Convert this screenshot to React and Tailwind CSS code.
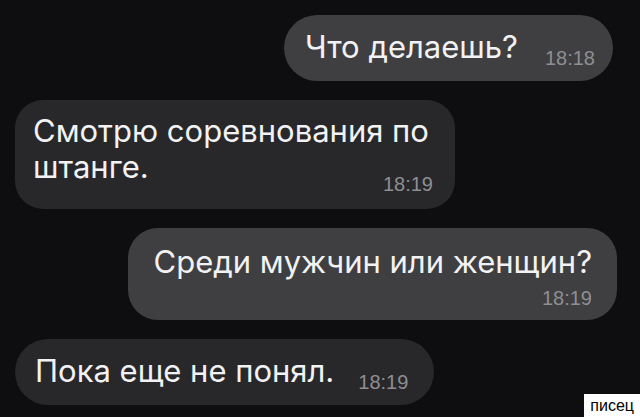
import React from "react";

const font = { fontFamily: 'Inter, "Liberation Sans", sans-serif' };

const Time = ({ children, className = "" }) => (
  <span
    className={`text-[20px] leading-[20px] text-[#8e8e93] font-['Liberation_Sans',Arial,sans-serif] ${className}`}
  >
    {children}
  </span>
);

const App = () => {
  return (
    <div
      className="relative w-[640px] h-[417px] overflow-hidden bg-[#0e0e10] text-[#f2f2f4] flex flex-col pt-[15px] gap-[19px]"
      style={font}
    >
      {/* outgoing */}
      <div className="self-end mr-[27px] flex items-end rounded-[33px] bg-[#3f3f41] pl-[21px] pr-[18px] pt-[14px] pb-[16px]">
        <span className="text-[31px] leading-[36px]">Что делаешь?</span>
        <Time className="ml-[27px] -mb-[3px]">18:18</Time>
      </div>

      {/* incoming */}
      <div className="self-start ml-[15px] w-[440px] flex flex-col rounded-[28px] bg-[#28282a] pl-[18px] pr-[22px] pt-[13px] pb-[15px]">
        <span className="text-[31px] leading-[36px]">
          Смотрю соревнования по
          <br />
          штанге.
        </span>
        <Time className="self-end -mt-[11px]">18:19</Time>
      </div>

      {/* outgoing */}
      <div className="self-end mr-[23px] flex flex-col rounded-[30px] bg-[#3f3f41] pl-[26px] pr-[25px] pt-[16px] pb-[12px]">
        <span className="text-[31px] leading-[36px]">Среди мужчин или женщин?</span>
        <Time className="self-end mt-[8px]">18:19</Time>
      </div>

      {/* incoming */}
      <div className="self-start ml-[15px] flex items-end rounded-[33px] bg-[#28282a] pl-[20px] pr-[26px] pt-[14px] pb-[16px]">
        <span className="text-[31px] leading-[36px]">Пока еще не понял.</span>
        <Time className="ml-[24px] -mb-[3px]">18:19</Time>
      </div>

      <div className="absolute right-0 bottom-0 bg-white text-black text-[16px] leading-[23px] px-[6px] font-['Liberation_Sans',Arial,sans-serif]">
        писец
      </div>
    </div>
  );
};

export default App;
